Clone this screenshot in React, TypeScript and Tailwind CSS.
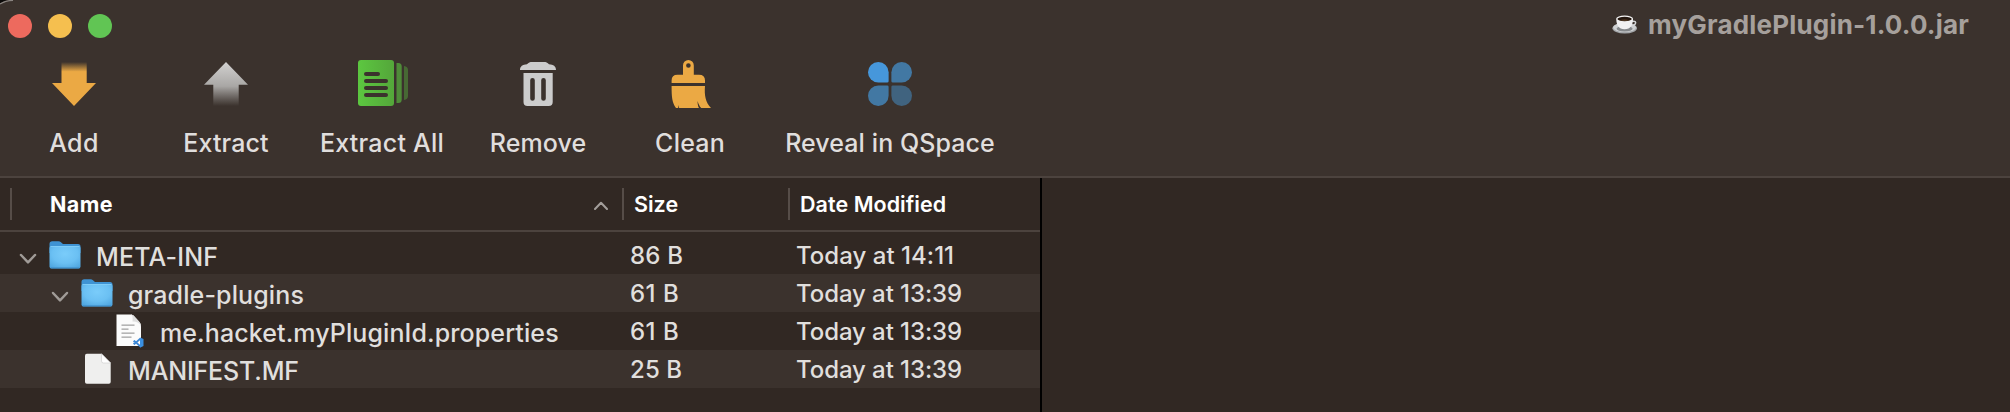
import type { ReactNode } from "react";

function AddIcon() {
  return (
    <svg width="56" height="56" viewBox="0 0 56 56">
      <defs>
        <linearGradient id="add" x1="0" y1="6" x2="0" y2="50" gradientUnits="userSpaceOnUse">
          <stop offset="0" stopColor="#eba944" stopOpacity="0" />
          <stop offset="0.22" stopColor="#eba944" />
        </linearGradient>
      </defs>
      <path d="M15.5 6H40.7V27H50L28 50L6 27H15.5Z" fill="url(#add)" />
    </svg>
  );
}

function ExtractIcon() {
  return (
    <svg width="56" height="56" viewBox="0 0 56 56">
      <defs>
        <linearGradient id="ext" x1="0" y1="6" x2="0" y2="50" gradientUnits="userSpaceOnUse">
          <stop offset="0" stopColor="#d2d1d0" />
          <stop offset="0.55" stopColor="#a9a7a5" />
          <stop offset="1" stopColor="#a09d9b" stopOpacity="0" />
        </linearGradient>
      </defs>
      <path d="M28 6L50 28.7H40.7V50H15.3V28.7H6Z" fill="url(#ext)" />
    </svg>
  );
}

function ExtractAllIcon() {
  return (
    <svg width="56" height="56" viewBox="0 0 56 56">
      <defs>
        <linearGradient id="all" x1="4" y1="0" x2="40" y2="0" gradientUnits="userSpaceOnUse">
          <stop offset="0" stopColor="#5cc740" />
          <stop offset="1" stopColor="#54a63a" />
        </linearGradient>
      </defs>
      <path d="M42.5 7H44.5Q47.7 7 47.7 10.5V43.5Q47.7 47 44.5 47H42.5Z" fill="#4f8b39" />
      <path d="M50 10Q54 10.5 54 14V40Q54 43.5 50 44Z" fill="#476934" />
      <rect x="4" y="4" width="36" height="46" rx="3" fill="url(#all)" />
      <g fill="#3b322d">
        <rect x="10" y="16" width="16" height="4" rx="2" />
        <rect x="10" y="23" width="24" height="4" rx="2" />
        <rect x="10" y="30" width="24" height="4" rx="2" />
        <rect x="10" y="37" width="24" height="4" rx="2" />
      </g>
    </svg>
  );
}

function RemoveIcon() {
  return (
    <svg width="56" height="56" viewBox="0 0 56 56">
      <path d="M10 14C10 10.5 12.5 8.5 17 8.3C18.5 6.6 20 6 22 6H34C36 6 37.5 6.6 39 8.3C43.5 8.5 46 10.5 46 14Z" fill="#ccc" />
      <path
        fillRule="evenodd"
        d="M13.5 17H42.7V46Q42.7 50 38.7 50H17.5Q13.5 50 13.5 46ZM22.5 22Q20.2 22 20.2 24.3V42.5Q20.2 44.8 22.5 44.8T24.8 42.5V24.3Q24.8 22 22.5 22ZM33.5 22Q31.2 22 31.2 24.3V42.5Q31.2 44.8 33.5 44.8T35.8 42.5V24.3Q35.8 22 33.5 22Z"
        fill="#ccc"
      />
    </svg>
  );
}

function CleanIcon() {
  return (
    <svg width="56" height="56" viewBox="0 0 56 56" fill="#eba944">
      <path
        fillRule="evenodd"
        d="M21 18.7V9.4A5.4 5.4 0 0 1 31.8 9.4V18.7H37Q43 18.7 43 24.5V27H9.6V24.5Q9.6 18.7 15.5 18.7ZM26.4 7.2A2.3 2.3 0 1 0 26.4 11.8A2.3 2.3 0 1 0 26.4 7.2Z"
      />
      <path d="M9.6 30H43C42.2 39 43.5 46.5 49 52H39.2C37.5 50.5 36.5 48 35.6 45C35.5 48 36 50.5 37 52H17.2Q16.6 51 16.5 49Q16 51 16.2 52H14C10 46.5 9.6 41 9.6 30Z" />
    </svg>
  );
}

function QSpaceIcon() {
  return (
    <svg width="56" height="56" viewBox="0 0 56 56">
      <path d="M16.3 6A10.3 10.3 0 0 1 26.6 16.3V25.2Q26.6 26.6 25.2 26.6H16.3A10.3 10.3 0 0 1 16.3 6Z" fill="#4697db" />
      <path d="M39.7 6A10.3 10.3 0 0 0 29.4 16.3V25.2Q29.4 26.6 30.8 26.6H39.7A10.3 10.3 0 0 0 39.7 6Z" fill="#4278a3" />
      <path d="M16.3 50A10.3 10.3 0 0 0 26.6 39.7V30.8Q26.6 29.4 25.2 29.4H16.3A10.3 10.3 0 0 0 16.3 50Z" fill="#4278a3" />
      <path d="M39.7 50A10.3 10.3 0 0 1 29.4 39.7V30.8Q29.4 29.4 30.8 29.4H39.7A10.3 10.3 0 0 1 39.7 50Z" fill="#40637f" />
    </svg>
  );
}

function CupIcon() {
  return (
    <svg width="26" height="26" viewBox="0 0 26 26" className="shrink-0">
      <ellipse cx="12.7" cy="16.3" rx="12.3" ry="5.2" fill="#a4a7aa" />
      <ellipse cx="12.6" cy="15.5" rx="11.5" ry="4.5" fill="#cfd1d3" />
      <ellipse cx="12.6" cy="16.8" rx="8" ry="2.8" fill="#85888b" />
      <path d="M20 9.3C23.5 8.8 24.3 10.3 23.2 12C22.3 13.2 20.8 13.6 18.8 13.7" fill="none" stroke="#d5d7d8" strokeWidth="1.5" />
      <path d="M4.3 7C4.3 12.5 6.5 17.3 12.6 17.3S21 12.5 21 7Z" fill="#f1f1f2" />
      <ellipse cx="12.6" cy="6.6" rx="8.4" ry="3" fill="#f5f5f5" />
      <ellipse cx="12.6" cy="7" rx="7.2" ry="2.2" fill="#24170f" />
      <path d="M8 8.2Q12.6 6.3 17.2 8.2Q12.6 9.9 8 8.2Z" fill="#4d3521" />
    </svg>
  );
}

function FolderIcon() {
  return (
    <svg width="32" height="28" viewBox="0 0 32 28" className="shrink-0">
      <defs>
        <radialGradient id="fold" cx="0.5" cy="0.35" r="0.75">
          <stop offset="0" stopColor="#7accfa" />
          <stop offset="0.55" stopColor="#6bc0f3" />
          <stop offset="1" stopColor="#4da4de" />
        </radialGradient>
      </defs>
      <path d="M0.5 3Q0.5 0.3 3.2 0.3H9.5Q11 0.3 12 1.3L13.3 2.4Q14 3 15.2 3H29Q31.5 3 31.5 5.5V12H0.5Z" fill="#3f93d3" />
      <rect x="0.5" y="5" width="31" height="22.6" rx="2" fill="url(#fold)" />
      <path d="M1.5 5.5H30.5" stroke="#85cff8" strokeWidth="0.8" />
      <path d="M1.5 26.9H30.5" stroke="#3c8dc9" strokeWidth="1" />
    </svg>
  );
}

function CodeFileIcon() {
  return (
    <svg width="28" height="34" viewBox="0 0 28 34" className="shrink-0">
      <path d="M0.5 0.5H14.5C16 0.5 17 1 18 2L23 7.5C24.3 9 25 10.5 25 12.5V32H0.5Z" fill="#fbfbfb" />
      <path d="M14.5 0.5C16.5 1 17 3 16.5 7.5C21 7.5 24 9 25 12.5C25 10.5 24.3 9 23 7.5L18 2C17 1 16 0.5 14.5 0.5Z" fill="#dedede" />
      <g fill="#a3a3a3">
        <rect x="5.5" y="10.5" width="13" height="1.3" />
        <rect x="5.5" y="14.5" width="7" height="1.3" />
        <rect x="5.5" y="18.5" width="13" height="1.3" />
        <rect x="5.5" y="22.5" width="10" height="1.3" />
      </g>
      <path d="M24.5 24.5L18.5 30L17.5 29.2M24.5 32.5L18.5 27L17.5 27.8" fill="none" stroke="#3a86d6" strokeWidth="1.7" />
      <path d="M24 23.5L27.5 25V32L24 33.7Z" fill="#3a8fe0" />
    </svg>
  );
}

function PlainFileIcon() {
  return (
    <svg width="28" height="32" viewBox="0 0 28 32" className="shrink-0">
      <path d="M1 2.5Q1 0.7 2.8 0.7H17.5L26.7 10V29Q26.7 30.8 24.9 30.8H2.8Q1 30.8 1 29Z" fill="#efefee" />
      <path d="M17.5 0.7V8Q17.5 10 19.5 10H26.7Z" fill="#fff" stroke="#c9c9c9" strokeWidth="0.6" />
    </svg>
  );
}

function Chevron() {
  return (
    <svg width="18" height="12" viewBox="0 0 18 12" className="shrink-0">
      <path d="M2 2L9 9.3L16 2" fill="none" stroke="#a09b97" strokeWidth="2.5" strokeLinecap="round" strokeLinejoin="round" />
    </svg>
  );
}

type Tool = { label: string; icon: ReactNode; box: string; text: string };

const tools: Tool[] = [
  { label: "Add", icon: <AddIcon />, box: "w-[148px]", text: "tracking-[0.4px]" },
  { label: "Extract", icon: <ExtractIcon />, box: "w-[156px]", text: "tracking-[0.12px]" },
  { label: "Extract All", icon: <ExtractAllIcon />, box: "w-[156px]", text: "tracking-[0.22px]" },
  { label: "Remove", icon: <RemoveIcon />, box: "w-[156px]", text: "tracking-[0.1px]" },
  { label: "Clean", icon: <CleanIcon />, box: "w-[148px]", text: "tracking-[0.2px]" },
  { label: "Reveal in QSpace", icon: <QSpaceIcon />, box: "w-[252px]", text: "tracking-[0.08px]" },
];

type Row = {
  name: string;
  size: string;
  date: string;
  indent: string;
  open: boolean;
  icon: ReactNode;
  iconBox: string;
  nameText: string;
  sizeText: string;
  dateText: string;
};

const rows: Row[] = [
  { name: "META-INF", size: "86 B", date: "Today at 14:11", indent: "pl-[19px]", open: true, icon: <FolderIcon />, iconBox: "pl-[12px]", nameText: "tracking-[0.15px]", sizeText: "tracking-[0.2px]", dateText: "tracking-[0.03px]" },
  { name: "gradle-plugins", size: "61 B", date: "Today at 13:39", indent: "pl-[51px]", open: true, icon: <FolderIcon />, iconBox: "pl-[12px]", nameText: "tracking-[0.12px]", sizeText: "tracking-[0.5px]", dateText: "tracking-[-0.08px]" },
  { name: "me.hacket.myPluginId.properties", size: "61 B", date: "Today at 13:39", indent: "pl-[101px]", open: false, icon: <CodeFileIcon />, iconBox: "pl-[15px]", nameText: "tracking-[0.1px]", sizeText: "tracking-[0.5px]", dateText: "tracking-[-0.08px]" },
  { name: "MANIFEST.MF", size: "25 B", date: "Today at 13:39", indent: "pl-[69px]", open: false, icon: <PlainFileIcon />, iconBox: "pl-[15px]", nameText: "tracking-[-0.18px]", sizeText: "tracking-[0.1px]", dateText: "tracking-[-0.08px]" },
];

function Toolbar() {
  return (
    <header className="relative h-[178px] border-b-2 border-[#4c433e] bg-[#3b322d]">
      <svg width="14" height="8" viewBox="0 0 14 8" className="absolute left-0 top-0">
        <path d="M0 0H7Q3 1 0 3.5Z" fill="#0c0a09" />
        <path d="M0 4Q5 0.6 13 0.3" fill="none" stroke="#8a8480" strokeWidth="1.2" />
      </svg>
      <div className="flex h-[52px] items-center justify-between pl-2 pr-[41px]">
        <div className="flex gap-4">
          <span className="size-6 rounded-full bg-[#ed6a5e]" />
          <span className="size-6 rounded-full bg-[#f5bf4f]" />
          <span className="size-6 rounded-full bg-[#61c554]" />
        </div>
        <div className="mb-[2px] flex items-center gap-[10px] text-[#a6a09c]">
          <CupIcon />
          <span className="whitespace-nowrap text-[26px] font-bold leading-8 tracking-[0.18px]">myGradlePlugin-1.0.0.jar</span>
        </div>
      </div>
      <nav className="flex pt-1">
        {tools.map((t) => (
          <button key={t.label} className={`flex flex-col items-center ${t.box}`}>
            {t.icon}
            <span className={`mt-[15px] whitespace-nowrap text-[25px] font-[450] leading-8 text-[#e0dedd] ${t.text}`}>{t.label}</span>
          </button>
        ))}
      </nav>
    </header>
  );
}

function FileTable() {
  return (
    <section className="w-[1040px] shrink-0 font-[450] text-[#e0dfdd]">
      <div className="flex h-[54px] border-b-2 border-[#4c433e] text-[21.5px] leading-[32px] text-white">
        <div className="my-[10px] ml-[10px] flex w-[612px] items-center border-l-2 border-[#564d48] pl-[38px] pr-[14px]">
          <span className="font-bold tracking-[0.4px]">Name</span>
          <svg width="14" height="9" viewBox="0 0 14 9" className="ml-auto mt-[2px]">
            <path d="M1 8L7 1.7L13 8" fill="none" stroke="#a39e9a" strokeWidth="2" strokeLinecap="round" strokeLinejoin="round" />
          </svg>
        </div>
        <div className="my-[10px] w-[166px] border-l-2 border-[#564d48] pl-[10px] font-semibold">Size</div>
        <div className="my-[10px] border-l-2 border-[#564d48] pl-[10px] font-semibold tracking-[0.05px]">Date Modified</div>
      </div>
      <div className="pt-[4px]">
        {rows.map((r) => (
          <div key={r.name} className="flex h-[38px] items-center odd:bg-[#312823] even:bg-[#3b322d]">
            <div className={`flex w-[630px] items-center ${r.indent}`}>
              {r.open && <span className="pt-[8px]"><Chevron /></span>}
              <span className={`flex w-[59px] ${r.iconBox}`}>{r.icon}</span>
              <span className={`whitespace-nowrap pt-[4px] text-[25px] leading-[34px] ${r.nameText}`}>{r.name}</span>
            </div>
            <span className={`w-[166px] pt-[1px] text-[24px] leading-[37px] ${r.sizeText}`}>{r.size}</span>
            <span className={`whitespace-nowrap pt-[1px] text-[24px] leading-[37px] ${r.dateText}`}>{r.date}</span>
          </div>
        ))}
      </div>
    </section>
  );
}

export default function App() {
  return (
    <div className="flex h-[412px] w-[2010px] flex-col overflow-hidden bg-[#312823] font-[Inter,sans-serif]">
      <Toolbar />
      <main className="flex flex-1">
        <FileTable />
        <div className="w-[2px] bg-black" />
      </main>
    </div>
  );
}
